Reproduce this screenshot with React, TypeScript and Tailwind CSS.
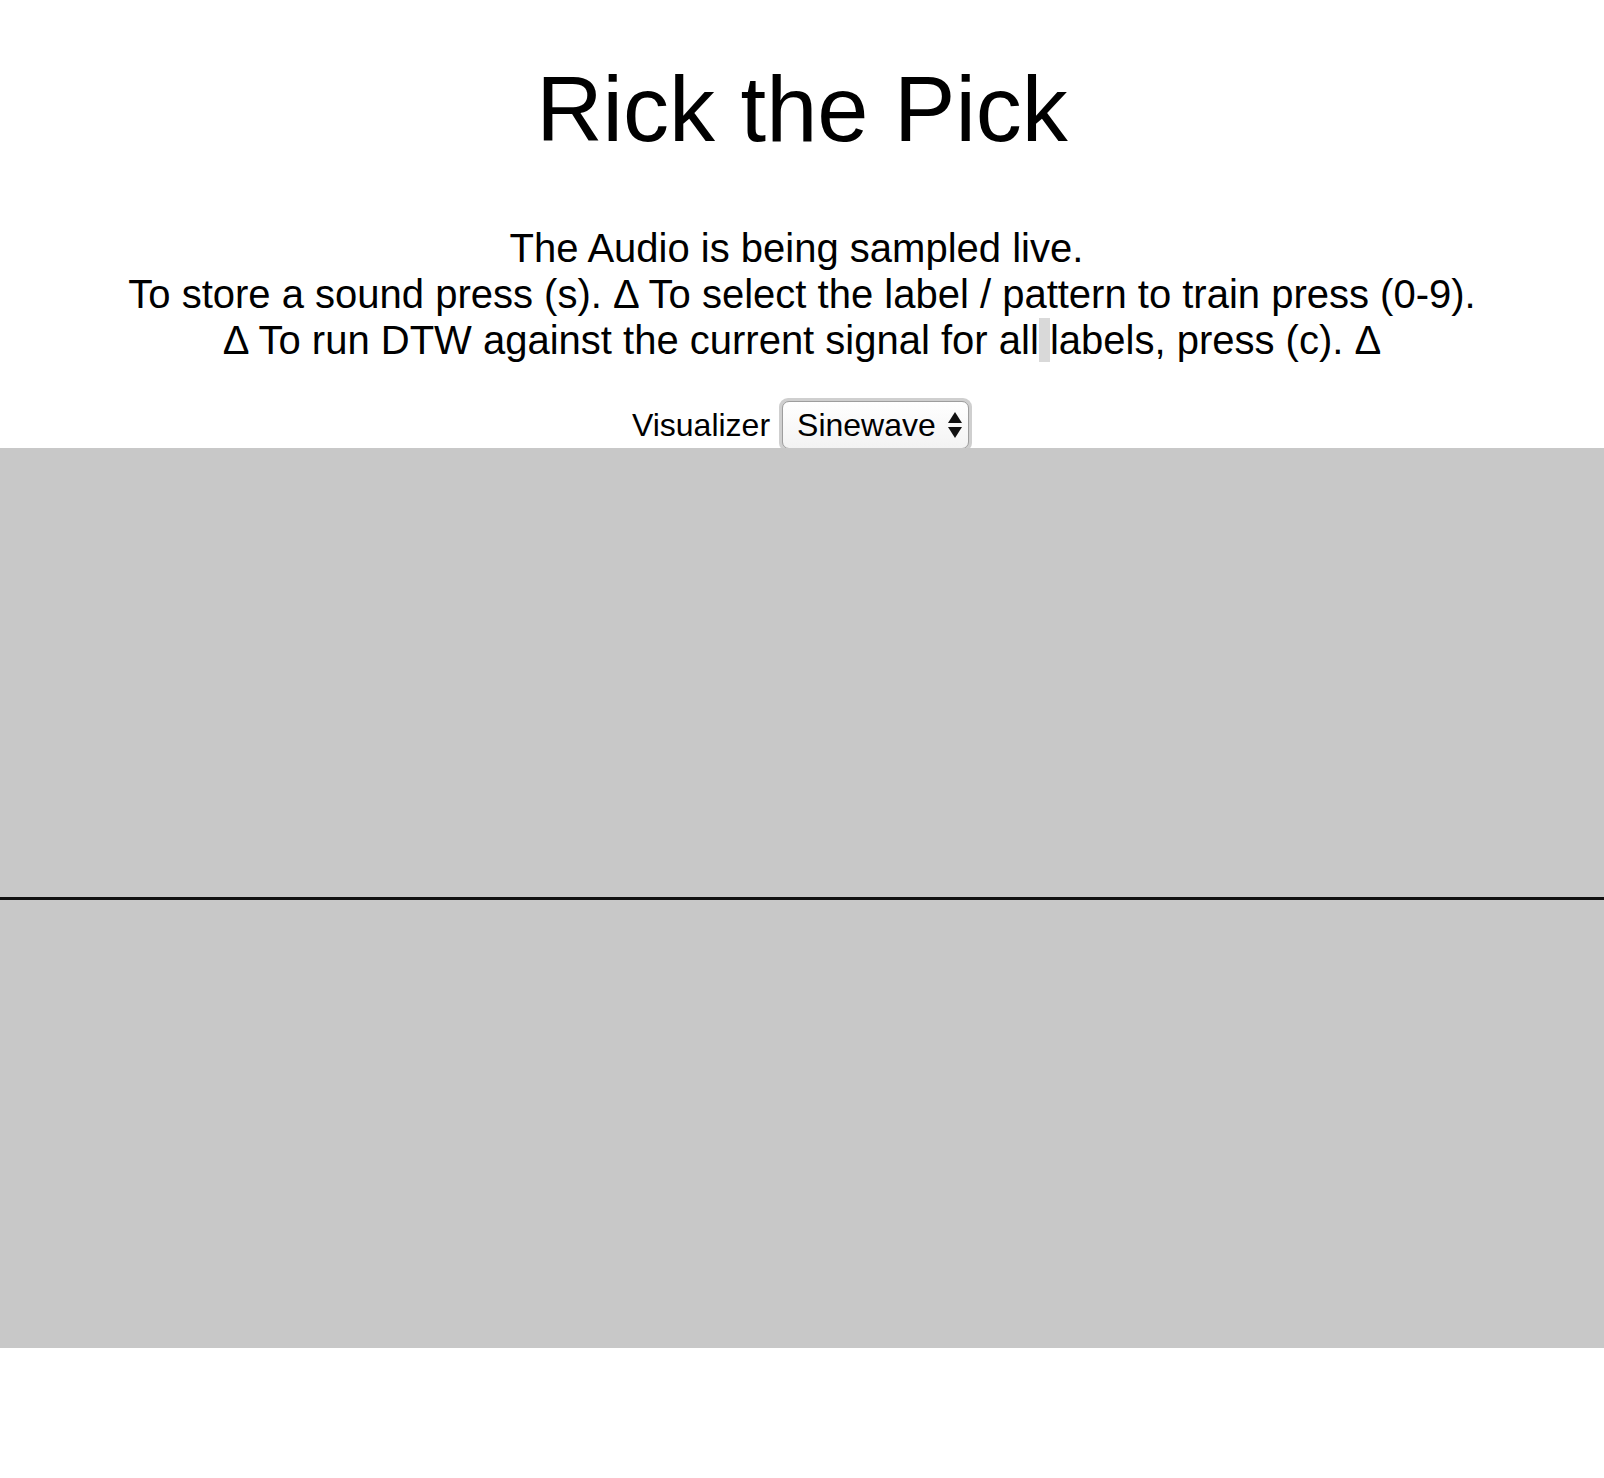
import React from 'react';

function SelectArrows() {
  return (
    <svg width="14" height="26" viewBox="0 0 14 26" className="shrink-0">
      <path d="M7 0 L14 11 L0 11 Z" fill="#111" />
      <path d="M7 26 L14 15 L0 15 Z" fill="#111" />
    </svg>
  );
}

export default function App() {
  return (
    <div className="min-h-screen bg-white text-black" style={{ fontFamily: '"Liberation Sans", Arial, sans-serif' }}>
      <h1 className="pt-[54px] text-center text-[92px] font-normal leading-[110px]">Rick the Pick</h1>

      <div className="mt-[61px] text-center text-[40px] leading-[46px]">
        <p>The Audio is being sampled live.&nbsp;</p>
        <p>To store a sound press (s). &Delta; To select the label / pattern to train press (0-9).</p>
        <p>
          &Delta; To run DTW against the current signal for all<span className="bg-[#d9d9d9]"> </span>labels, press (c). &Delta;
        </p>
      </div>

      <div className="mt-[35px] -mb-[4px] flex items-center justify-center gap-[9px] text-[32px]">
        <span>Visualizer</span>
        <div className="h-[54px] w-[193px] rounded-[9px] bg-[#cfcfcf] p-[3px]">
          <div className="flex h-full items-center rounded-[7px] border border-[#9e9e9e] bg-gradient-to-b from-white to-[#f3f3f3] pl-[14px] pr-[6px]">
            <span className="flex-1">Sinewave</span>
            <SelectArrows />
          </div>
        </div>
      </div>

      <div className="relative flex h-[900px] w-full items-center bg-[#c8c8c8]">
        <div className="h-[3px] w-full bg-[#111]" />
      </div>
    </div>
  );
}
